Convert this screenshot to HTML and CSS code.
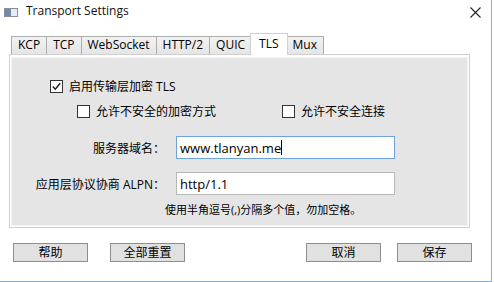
FILE: index.html
```html
<!DOCTYPE html>
<html>
<head>
<meta charset="utf-8">
<link rel="stylesheet" href="styles.css">
</head>
<body>
<div class="window">
  <div class="titlebar">
    <span class="appicon"><span class="appicon-left"></span></span>
    <span class="title">Transport Settings</span>
    <span class="close">
      <svg width="11" height="11" viewBox="0 0 11 11"><path d="M0.5 0.5 L10.5 10.5 M10.5 0.5 L0.5 10.5" stroke="#222" stroke-width="1.1" fill="none"/></svg>
    </span>
  </div>
  <div class="tabs">
    <span class="tab">KCP</span>
    <span class="tab">TCP</span>
    <span class="tab">WebSocket</span>
    <span class="tab">HTTP/2</span>
    <span class="tab">QUIC</span>
    <span class="tab active">TLS</span>
    <span class="tab">Mux</span>
  </div>
  <div class="panel">
    <div class="panel-inner">
      <label class="check row-tls">
        <span class="box"><svg width="11" height="11" viewBox="0 0 11 11"><path d="M1.8 5.6 L4.3 8.2 L9.2 2.2" stroke="#222" stroke-width="1.5" fill="none"/></svg></span>
        <span class="cjk">启用传输层加密 TLS</span>
      </label>
      <div class="row-insecure">
        <label class="check">
          <span class="box"></span>
          <span class="cjk">允许不安全的加密方式</span>
        </label>
        <label class="check">
          <span class="box"></span>
          <span class="cjk">允许不安全连接</span>
        </label>
      </div>
      <div class="form">
        <span class="flabel cjk">服务器域名：</span>
        <span class="input focused">www.tlanyan.me<span class="caret"></span></span>
        <span class="flabel cjk second">应用层协议协商 ALPN：</span>
        <span class="input second">http/1.1</span>
        <span class="hint cjk">使用半角逗号(,)分隔多个值，勿加空格。</span>
      </div>
    </div>
  </div>
  <div class="buttons">
    <div class="group">
      <span class="btn cjk">帮助</span>
      <span class="btn cjk">全部重置</span>
    </div>
    <div class="group right">
      <span class="btn cjk">取消</span>
      <span class="btn cjk">保存</span>
    </div>
  </div>
</div>
</body>
</html>
```

FILE: styles.css
```css
* { box-sizing: border-box; }
html, body { margin: 0; padding: 0; background: #ffffff; }
body {
  font-family: "Open Sans", "Noto Sans CJK SC", sans-serif;
  font-size: 12px;
  color: #000;
}
.cjk { font-family: "Open Sans", "Noto Sans CJK SC", sans-serif; }
.window {
  width: 492px;
  height: 282px;
  border-right: 1px solid #7eb0e2;
  border-bottom: 1px solid #7eb0e2;
  display: flex;
  flex-direction: column;
  background: #fff;
}
.titlebar {
  height: 33px;
  display: flex;
  align-items: flex-start;
  padding-top: 3px;
  position: relative;
}
.appicon {
  margin: 5px 0 0 4px;
  width: 14px;
  height: 9px;
  border: 1px solid #8a8f96;
  background: #e8edf2;
  display: flex;
}
.appicon-left { width: 6px; background: #6f8da8; }
.title {
  margin-left: 8px;
  font-size: 12px;
  line-height: 16px;
  color: #111;
}
.close {
  margin-left: auto;
  margin-right: 10px;
  margin-top: 4px;
  width: 11px;
  height: 11px;
  display: flex;
}
.tabs {
  display: flex;
  align-items: flex-end;
  padding-left: 11px;
  height: 21px;
  position: relative;
  z-index: 1;
}
.tab {
  height: 18px;
  padding: 0 6px;
  border: 1px solid #acacac;
  border-bottom: none;
  margin-right: -1px;
  background: linear-gradient(#f2f2f2, #e5e5e5);
  line-height: 16px;
  font-size: 12px;
  color: #000;
}
.tab.active {
  height: 22px;
  margin-bottom: -1px;
  background: #fff;
  border-color: #d0d0d0;
  padding: 0 8px;
  line-height: 20px;
  margin-left: -1px;
  margin-right: -2px;
  position: relative;
  z-index: 2;
}
.panel {
  margin: 0 21px 0 9px;
  height: 174px;
  border: 1px solid #d0d0d0;
  background: #fff;
  padding: 2px 1px 1px 1px;
}
.panel-inner {
  height: 100%;
  background: #e5e5e5;
  border: 1px solid #f4f4f4;
  padding: 21px 0 0 38px;
  display: flex;
  flex-direction: column;
}
.check {
  display: flex;
  align-items: center;
  height: 14px;
  font-size: 12px;
  white-space: nowrap;
}
.box {
  width: 13px;
  height: 13px;
  border: 1px solid #333;
  background: #fff;
  margin-right: 6px;
  display: flex;
  align-items: center;
  justify-content: center;
}
.row-insecure {
  display: flex;
  margin-top: 11px;
  padding-left: 27px;
}
.row-insecure .check:first-child { width: 205px; }
.form {
  display: grid;
  grid-template-columns: 153px 219px;
  column-gap: 11px;
  margin-left: -38px;
  margin-top: 18px;
  align-items: center;
}
.flabel {
  text-align: right;
  font-size: 12px;
  white-space: nowrap;
}
.input {
  height: 23px;
  border: 1px solid #b8b8b8;
  background: #fff;
  font-size: 13px;
  padding: 0 3px;
  line-height: 20px;
  display: flex;
  align-items: center;
}
.input.focused { border-color: #6ea3dd; }
.caret {
  display: inline-block;
  width: 1px;
  height: 15px;
  background: #000;
}
.second { margin-top: 13px; }
.hint {
  grid-column: 1 / 3;
  padding-left: 153px;
  font-size: 11px;
  margin-top: 6px;
  white-space: nowrap;
}
.buttons {
  display: flex;
  justify-content: space-between;
  margin: 15px 19px 0 13px;
}
.group { display: flex; gap: 22px; }
.group.right { gap: 16px; }
.btn {
  width: 75px;
  height: 19px;
  border: 1px solid #8e8e8e;
  background: #e1e1e1;
  display: flex;
  align-items: center;
  justify-content: center;
  font-size: 12px;
  line-height: 17px;
}
```
